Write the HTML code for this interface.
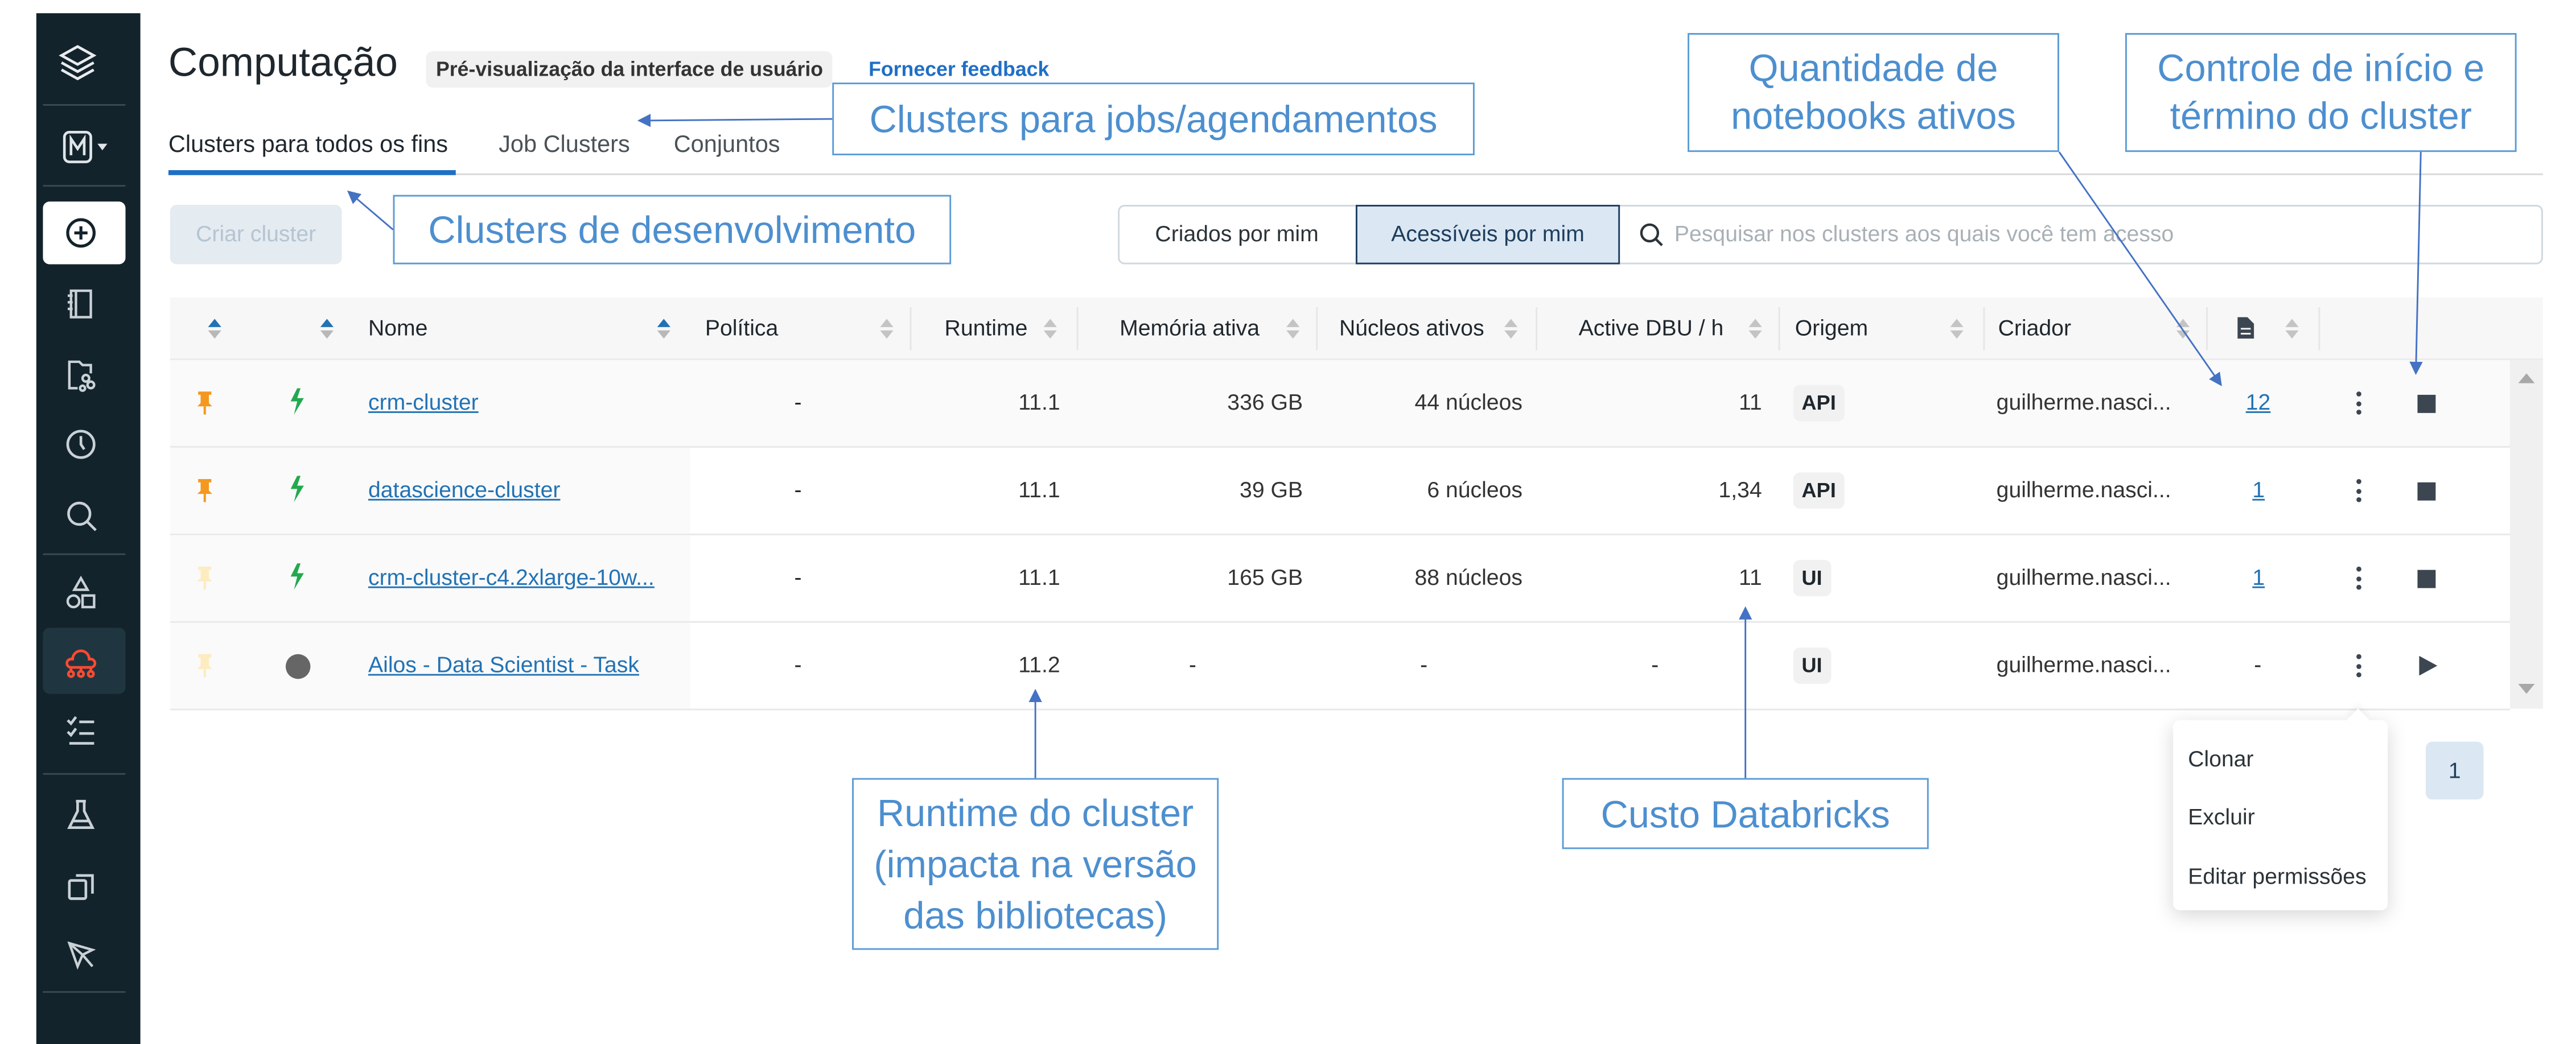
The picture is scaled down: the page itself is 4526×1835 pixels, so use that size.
<!DOCTYPE html>
<html><head><meta charset="utf-8">
<style>
*{box-sizing:border-box;margin:0;padding:0}
html,body{width:4526px;height:1835px;overflow:hidden;background:#fff}
#w{position:absolute;left:0;top:0;width:1560px;height:632px;transform:scale(2.9013,2.9035);transform-origin:0 0;font-family:"Liberation Sans",Arial,sans-serif;color:#1f272d}
.a{position:absolute;white-space:nowrap}
.sb{position:absolute;left:22px;top:8px;width:63px;height:624px;background:#13232b}
.dv{position:absolute;left:4px;width:50px;height:1px;background:#3a4a52}
.ic{position:absolute;left:14px;width:22px;height:22px}
.ann{position:absolute;border:1px solid #5b9bd5;background:#fff;color:#4d8fcf;font-family:"Liberation Sans",sans-serif;font-size:23px;text-align:center;line-height:26px;display:flex;align-items:center;justify-content:center;white-space:nowrap}
.th{position:absolute;top:180px;height:38px;font-size:13.5px;line-height:38px;color:#1f272d}
.srt{position:absolute;width:8px;height:12px}
.cd{position:absolute;top:186px;width:1px;height:26px;background:#e6e6e6}
.row{position:absolute;left:103px;width:1417px;height:53px;border-bottom:1px solid #e8e8e8;font-size:13.5px}
.c{position:absolute;top:0;line-height:52px}
.lk{color:#2272b4;text-decoration:underline}
.bd{position:absolute;top:15px;height:22px;line-height:22px;padding:0 5px;background:#f1f1f1;border-radius:4px;font-weight:bold;font-size:12.5px}
.stop{position:absolute;top:21px;left:1361px;width:11px;height:11px;background:#3c4650}
.keb{position:absolute;top:19px;left:1324px;width:3px;height:14px}
.keb i{display:block;width:3px;height:3px;border-radius:50%;background:#3c4650;margin-bottom:2.5px}
</style></head><body><div id="w">

<div class="sb">
 <svg class="ic" style="top:18px;left:12px;width:26px;height:26px" viewBox="0 0 24 24" fill="none" stroke="#e8ecee" stroke-width="1.5"><path d="M12 2L21 7 12 12 3 7Z"/><path d="M3 11l9 5 9-5"/><path d="M3 15l9 5 9-5"/></svg>
 <div class="dv" style="top:55px"></div>
 <svg class="ic" style="top:70px;left:15px;width:30px" viewBox="0 0 30 22" fill="none" stroke="#dfe5e8" stroke-width="1.6"><rect x="2" y="2" width="16" height="18" rx="3"/><path d="M6 16V6l4 6 4-6v10"/><path d="M22 9h6l-3 4z" fill="#dfe5e8" stroke="none"/></svg>
 <div class="dv" style="top:104px"></div>
 <div style="position:absolute;left:4px;top:114px;width:50px;height:38px;background:#fff;border-radius:4px"></div>
 <svg class="ic" style="top:122px;left:16px" viewBox="0 0 22 22" fill="none" stroke="#13232b" stroke-width="1.8"><circle cx="11" cy="11" r="8"/><path d="M11 7v8M7 11h8"/></svg>
 <svg class="ic" style="top:165px;left:16px" viewBox="0 0 22 22" fill="none" stroke="#c9d1d6" stroke-width="1.5"><rect x="5" y="3" width="12" height="16"/><path d="M8 3v16M3 6h3M3 10h3M3 14h3"/></svg>
 <svg class="ic" style="top:208px;left:16px" viewBox="0 0 22 22" fill="none" stroke="#c9d1d6" stroke-width="1.5"><path d="M9 19H4V3h6l2 2h5v5"/><circle cx="14" cy="13" r="2"/><circle cx="17" cy="17" r="2"/><circle cx="12" cy="19" r="1.5"/></svg>
 <svg class="ic" style="top:250px;left:16px" viewBox="0 0 22 22" fill="none" stroke="#c9d1d6" stroke-width="1.6"><circle cx="11" cy="11" r="8"/><path d="M11 6v5l2 3"/></svg>
 <svg class="ic" style="top:293px;left:16px" viewBox="0 0 22 22" fill="none" stroke="#c9d1d6" stroke-width="1.6"><circle cx="10" cy="10" r="6.5"/><path d="M15 15l5 5"/></svg>
 <div class="dv" style="top:327px"></div>
 <svg class="ic" style="top:340px;left:16px" viewBox="0 0 22 22" fill="none" stroke="#c9d1d6" stroke-width="1.5"><path d="M11 2l4 7H7z"/><circle cx="6.5" cy="16" r="3.5"/><rect x="12" y="12.5" width="7" height="7"/></svg>
 <div style="position:absolute;left:4px;top:372px;width:50px;height:40px;background:#1f3640;border-radius:4px"></div>
 <svg class="ic" style="top:381px;left:16px" viewBox="0 0 22 22" fill="none" stroke="#ff4a32" stroke-width="1.6"><path d="M6 10a5 5 0 0 1 10 0h1a2.5 2.5 0 0 1 0 5H5a2.5 2.5 0 0 1 0-5z"/><path d="M11 15v2M5 15v2M17 15v2"/><circle cx="5" cy="19" r="1.6"/><circle cx="11" cy="19" r="1.6"/><circle cx="17" cy="19" r="1.6"/></svg>
 <svg class="ic" style="top:423px;left:16px" viewBox="0 0 22 22" fill="none" stroke="#c9d1d6" stroke-width="1.6"><path d="M3 5l2 2 3-4M3 12l2 2 3-4M10 6h9M10 13h9M4 19h15"/></svg>
 <div class="dv" style="top:460px"></div>
 <svg class="ic" style="top:474px;left:16px" viewBox="0 0 22 22" fill="none" stroke="#c9d1d6" stroke-width="1.6"><path d="M8 3h6M9 3v6l-5 10h14l-5-10V3M6 15h10"/></svg>
 <svg class="ic" style="top:517px;left:16px" viewBox="0 0 22 22" fill="none" stroke="#c9d1d6" stroke-width="1.6"><rect x="4" y="8" width="10" height="11" rx="1"/><path d="M8 5h10v11"/></svg>
 <svg class="ic" style="top:559px;left:16px" viewBox="0 0 22 22" fill="none" stroke="#c9d1d6" stroke-width="1.5"><path d="M4 4l14 4-6 3-3 7z"/><path d="M12 11l6 7M4 4l8 7"/></svg>
 <div class="dv" style="top:592px"></div>
</div>

<div class="a" style="left:102px;top:25px;font-size:24.5px;color:#1f272d">Computação</div>
<div class="a" style="left:258px;top:31px;height:22px;line-height:22px;padding:0 6px;background:#f1f1f1;border-radius:4px;font-size:12.3px;font-weight:bold;color:#333">Pré-visualização da interface de usuário</div>
<div class="a" style="left:526px;top:35px;font-size:12.3px;font-weight:bold;color:#1f6fc5">Fornecer feedback</div>

<div class="a" style="left:102px;top:80px;font-size:14.3px;color:#1f272d">Clusters para todos os fins</div>
<div class="a" style="left:302px;top:80px;font-size:14.3px;color:#4a5258">Job Clusters</div>
<div class="a" style="left:408px;top:80px;font-size:14.3px;color:#4a5258">Conjuntos</div>
<div class="a" style="left:102px;top:105px;width:1438px;height:1px;background:#d9d9d9"></div>
<div class="a" style="left:102px;top:103px;width:174px;height:3px;background:#1f6fc5"></div>

<div class="a" style="left:103px;top:124px;width:104px;height:36px;background:#e4ebf1;border-radius:4px;color:#b5c4d1;font-size:13.5px;line-height:36px;text-align:center">Criar cluster</div>
<div class="a" style="left:677px;top:124px;width:863px;height:36px;border:1px solid #cfd8e0;border-radius:4px"></div>
<div class="a" style="left:677px;top:124px;width:144px;height:36px;line-height:36px;text-align:center;font-size:13.5px;color:#2b3338">Criados por mim</div>
<div class="a" style="left:821px;top:124px;width:160px;height:36px;line-height:34px;text-align:center;font-size:13.5px;color:#1d3d5e;background:#dbe7f2;border:1px solid #1d3d5e">Acessíveis por mim</div>
<svg class="a" style="left:992px;top:134px" width="16" height="16" viewBox="0 0 16 16" fill="none" stroke="#2b3338" stroke-width="1.5"><circle cx="7" cy="7" r="5"/><path d="M11 11l3.5 3.5"/></svg>
<div class="a" style="left:1014px;top:134px;font-size:13.5px;color:#a9b0b5">Pesquisar nos clusters aos quais você tem acesso</div>

<div class="a" style="left:103px;top:180px;width:1437px;height:38px;background:#f7f7f7;border-bottom:1px solid #ececec"></div>
<svg width="0" height="0" style="position:absolute"><defs>
<g id="sb"><path d="M4 0L8 5H0z" fill="#2272b4"/><path d="M4 12L8 7H0z" fill="#b8b8b8"/></g>
<g id="sg"><path d="M4 0L8 5H0z" fill="#c4c4c4"/><path d="M4 12L8 7H0z" fill="#c4c4c4"/></g>
</defs></svg>
<svg class="srt" style="left:126px;top:193px"><use href="#sb"/></svg>
<svg class="srt" style="left:194px;top:193px"><use href="#sb"/></svg>
<div class="th" style="left:223px">Nome</div>
<svg class="srt" style="left:398px;top:193px"><use href="#sb"/></svg>
<div class="th" style="left:427px">Política</div>
<svg class="srt" style="left:533px;top:193px"><use href="#sg"/></svg>
<div class="cd" style="left:551px"></div>
<div class="th" style="left:572px">Runtime</div>
<svg class="srt" style="left:632px;top:193px"><use href="#sg"/></svg>
<div class="cd" style="left:652px"></div>
<div class="th" style="left:678px">Memória ativa</div>
<svg class="srt" style="left:779px;top:193px"><use href="#sg"/></svg>
<div class="cd" style="left:797px"></div>
<div class="th" style="left:811px">Núcleos ativos</div>
<svg class="srt" style="left:911px;top:193px"><use href="#sg"/></svg>
<div class="cd" style="left:930px"></div>
<div class="th" style="left:956px">Active DBU / h</div>
<svg class="srt" style="left:1059px;top:193px"><use href="#sg"/></svg>
<div class="cd" style="left:1077px"></div>
<div class="th" style="left:1087px">Origem</div>
<svg class="srt" style="left:1181px;top:193px"><use href="#sg"/></svg>
<div class="cd" style="left:1201px"></div>
<div class="th" style="left:1210px">Criador</div>
<svg class="srt" style="left:1318px;top:193px"><use href="#sg"/></svg>
<div class="cd" style="left:1336px"></div>
<svg class="a" style="left:1355px;top:192px" width="10" height="13" viewBox="0 0 10 13"><path d="M0 0h6l4 4v9H0z" fill="#3c4650"/><path d="M2 7h6M2 10h6" stroke="#f7f7f7" stroke-width="1"/></svg>
<svg class="srt" style="left:1384px;top:193px"><use href="#sg"/></svg>
<div class="cd" style="left:1404px"></div>

<div class="a" style="left:1520px;top:218px;width:20px;height:211px;background:#f0f0f0"></div>
<svg class="a" style="left:1525px;top:226px" width="10" height="6"><path d="M5 0L10 6H0z" fill="#a8a8a8"/></svg>
<svg class="a" style="left:1525px;top:414px" width="10" height="6"><path d="M5 6L10 0H0z" fill="#a8a8a8"/></svg>

<svg width="0" height="0" style="position:absolute"><defs>
<g id="pin"><path d="M2 0h8v2H8.5v5l2 2H1.5l2-2V2H2z"/><path d="M5.3 9h1.4v5H5.3z"/></g>
<g id="bolt"><path d="M5 0L1 8h4l-2 8 6-10H5l2-6z" fill="#22a94f"/></g>
</defs></svg>

<div class="row" style="top:218px;background:#fafafa">
 <svg class="a" style="left:15px;top:19px" width="12" height="14" fill="#f5981f"><use href="#pin"/></svg>
 <svg class="a" style="left:72px;top:17px" width="10" height="17"><use href="#bolt"/></svg>
 <div class="c lk" style="left:120px">crm-cluster</div>
 <div class="c" style="left:378px">-</div>
 <div class="c" style="left:490px;width:49px;text-align:right;color:#333">11.1</div>
 <div class="c" style="left:590px;width:96px;text-align:right;color:#333">336 GB</div>
 <div class="c" style="left:720px;width:99px;text-align:right;color:#333">44 núcleos</div>
 <div class="c" style="left:900px;width:64px;text-align:right;color:#333">11</div>
 <div class="bd" style="left:983px">API</div>
 <div class="c" style="left:1106px;color:#333">guilherme.nasci...</div>
 <div class="c lk" style="left:1257px">12</div>
 <div class="keb"><i></i><i></i><i></i></div>
 <div class="stop"></div>
</div>
<div class="row" style="top:271px">
 <div class="a" style="left:0;top:0;width:315px;height:52px;background:#fafafa"></div>
 <svg class="a" style="left:15px;top:19px" width="12" height="14" fill="#f5981f"><use href="#pin"/></svg>
 <svg class="a" style="left:72px;top:17px" width="10" height="17"><use href="#bolt"/></svg>
 <div class="c lk" style="left:120px">datascience-cluster</div>
 <div class="c" style="left:378px">-</div>
 <div class="c" style="left:490px;width:49px;text-align:right;color:#333">11.1</div>
 <div class="c" style="left:590px;width:96px;text-align:right;color:#333">39 GB</div>
 <div class="c" style="left:720px;width:99px;text-align:right;color:#333">6 núcleos</div>
 <div class="c" style="left:900px;width:64px;text-align:right;color:#333">1,34</div>
 <div class="bd" style="left:983px">API</div>
 <div class="c" style="left:1106px;color:#333">guilherme.nasci...</div>
 <div class="c lk" style="left:1261px">1</div>
 <div class="keb"><i></i><i></i><i></i></div>
 <div class="stop"></div>
</div>
<div class="row" style="top:324px">
 <div class="a" style="left:0;top:0;width:315px;height:52px;background:#fafafa"></div>
 <svg class="a" style="left:15px;top:19px" width="12" height="14" fill="#fcecc0"><use href="#pin"/></svg>
 <svg class="a" style="left:72px;top:17px" width="10" height="17"><use href="#bolt"/></svg>
 <div class="c lk" style="left:120px">crm-cluster-c4.2xlarge-10w...</div>
 <div class="c" style="left:378px">-</div>
 <div class="c" style="left:490px;width:49px;text-align:right;color:#333">11.1</div>
 <div class="c" style="left:590px;width:96px;text-align:right;color:#333">165 GB</div>
 <div class="c" style="left:720px;width:99px;text-align:right;color:#333">88 núcleos</div>
 <div class="c" style="left:900px;width:64px;text-align:right;color:#333">11</div>
 <div class="bd" style="left:983px">UI</div>
 <div class="c" style="left:1106px;color:#333">guilherme.nasci...</div>
 <div class="c lk" style="left:1261px">1</div>
 <div class="keb"><i></i><i></i><i></i></div>
 <div class="stop"></div>
</div>
<div class="row" style="top:377px">
 <div class="a" style="left:0;top:0;width:315px;height:52px;background:#fafafa"></div>
 <svg class="a" style="left:15px;top:19px" width="12" height="14" fill="#fcecc0"><use href="#pin"/></svg>
 <div class="a" style="left:70px;top:19px;width:15px;height:15px;border-radius:50%;background:#666"></div>
 <div class="c lk" style="left:120px">Ailos - Data Scientist - Task</div>
 <div class="c" style="left:378px">-</div>
 <div class="c" style="left:490px;width:49px;text-align:right;color:#333">11.2</div>
 <div class="c" style="left:617px">-</div>
 <div class="c" style="left:757px">-</div>
 <div class="c" style="left:897px">-</div>
 <div class="bd" style="left:983px">UI</div>
 <div class="c" style="left:1106px;color:#333">guilherme.nasci...</div>
 <div class="c" style="left:1262px">-</div>
 <div class="keb"><i></i><i></i><i></i></div>
 <svg class="a" style="left:1362px;top:20px" width="11" height="12"><path d="M0 0L11 6 0 12z" fill="#3c4650"/></svg>
</div>

<div class="a" style="left:1316px;top:436px;width:130px;height:115px;background:#fff;border-radius:4px;box-shadow:0 3px 12px rgba(0,0,0,.16)"></div>
<div class="a" style="left:1423px;top:431px;width:10px;height:10px;background:#fff;transform:rotate(45deg);box-shadow:-2px -2px 4px rgba(0,0,0,.05)"></div>
<div class="a" style="left:1325px;top:452px;font-size:13.5px;color:#2b3338">Clonar</div>
<div class="a" style="left:1325px;top:487px;font-size:13.5px;color:#2b3338">Excluir</div>
<div class="a" style="left:1325px;top:523px;font-size:13.5px;color:#2b3338">Editar permissões</div>

<div class="a" style="left:1469px;top:449px;width:35px;height:35px;background:#dbe7f2;border-radius:4px;line-height:35px;text-align:center;font-size:13.5px;color:#1d3d5e">1</div>

<div class="ann" style="left:504px;top:50px;width:389px;height:44px">Clusters para jobs/agendamentos</div>
<div class="ann" style="left:238px;top:118px;width:338px;height:42px">Clusters de desenvolvimento</div>
<div class="ann" style="left:1022px;top:20px;width:225px;height:72px;line-height:29px">Quantidade de<br>notebooks ativos</div>
<div class="ann" style="left:1287px;top:20px;width:237px;height:72px;line-height:29px">Controle de início e<br>término do cluster</div>
<div class="ann" style="left:516px;top:471px;width:222px;height:104px;line-height:31px">Runtime do cluster<br>(impacta na versão<br>das bibliotecas)</div>
<div class="ann" style="left:946px;top:471px;width:222px;height:43px">Custo Databricks</div>

<svg class="a" style="left:0;top:0" width="1560" height="632">
<defs><marker id="ar" markerWidth="8" markerHeight="8" refX="7" refY="4" orient="auto" markerUnits="userSpaceOnUse"><path d="M0 0L8 4 0 8z" fill="#4472c4"/></marker></defs>
<g stroke="#4472c4" stroke-width="1" fill="none" marker-end="url(#ar)">
<path d="M504 72L387 73"/>
<path d="M238 139L211 116"/>
<path d="M1247 92L1345 233"/>
<path d="M1466 92L1463 226"/>
<path d="M627 471L627 418"/>
<path d="M1057 471L1057 368"/>
</g></svg>

</div></body></html>
